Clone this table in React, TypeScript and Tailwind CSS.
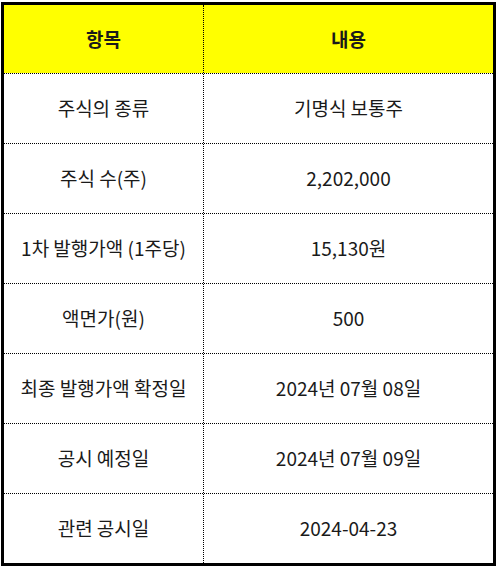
const rows: [string, string][] = [
  ['주식의 종류', '기명식 보통주'],
  ['주식 수(주)', '2,202,000'],
  ['1차 발행가액 (1주당)', '15,130원'],
  ['액면가(원)', '500'],
  ['최종 발행가액 확정일', '2024년 07월 08일'],
  ['공시 예정일', '2024년 07월 09일'],
  ['관련 공시일', '2024-04-23'],
]

export default function App() {
  return (
    <div className="w-[497px] h-[569px] bg-white pl-[1px] pt-[2px] font-['Noto_Sans_CJK_KR',sans-serif] text-[19px] text-[#1a1a1a]">
      <div className="w-[495px] border-[3px] border-black">
        {/* Header */}
        <div className="flex h-[68px] bg-[#ffff00] font-bold">
          <div className="w-[200px] border-r border-dotted border-black flex items-center justify-center">항목</div>
          <div className="flex-1 flex items-center justify-center">내용</div>
        </div>
        {rows.map(([k, v]) => (
          <div key={k} className="flex h-[70px] border-t border-dotted border-black">
            <div className="w-[200px] border-r border-dotted border-black flex items-center justify-center">{k}</div>
            <div className="flex-1 flex items-center justify-center">{v}</div>
          </div>
        ))}
      </div>
    </div>
  )
}
